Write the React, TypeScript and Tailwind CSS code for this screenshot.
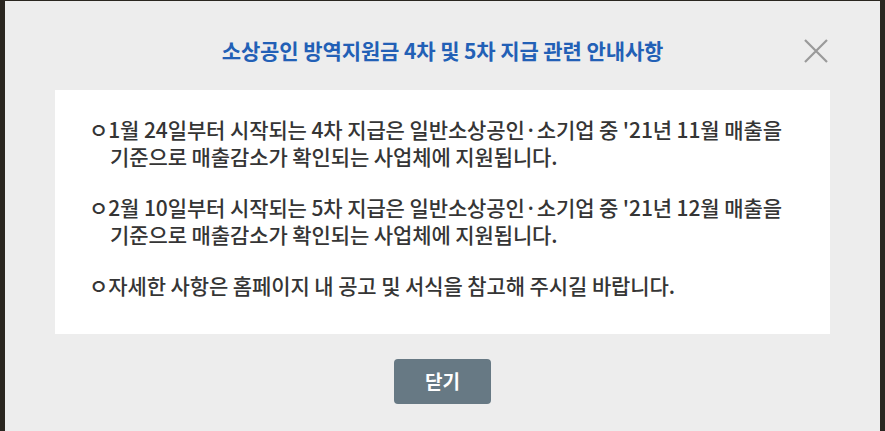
import React from "react";

const notices: string[][] = [
  [
    "1월 24일부터 시작되는 4차 지급은 일반소상공인·소기업 중 '21년 11월 매출을",
    "기준으로 매출감소가 확인되는 사업체에 지원됩니다.",
  ],
  [
    "2월 10일부터 시작되는 5차 지급은 일반소상공인·소기업 중 '21년 12월 매출을",
    "기준으로 매출감소가 확인되는 사업체에 지원됩니다.",
  ],
  ["자세한 사항은 홈페이지 내 공고 및 서식을 참고해 주시길 바랍니다."],
];

export default function App() {
  return (
    <div
      className="w-[885px] h-[431px] overflow-hidden bg-[#2a2620] flex pt-px px-[5px]"
      style={{ fontFamily: '"Noto Sans CJK KR", "Noto Sans", sans-serif' }}
    >
      <div className="relative flex-1 bg-[#ededed] flex flex-col">
        <h2 className="pt-[36px] h-[89px] text-center text-[21px] font-bold leading-[27px] tracking-[-0.1px] text-[#2260b6]">
          소상공인 방역지원금 4차 및 5차 지급 관련 안내사항
        </h2>
        <button className="absolute right-[50px] top-[36px] w-[28px] h-[28px] flex items-center justify-center">
          <svg width="26" height="26" viewBox="0 0 26 26">
            <path d="M2 2 L24 24 M24 2 L2 24" stroke="#9a9a9a" strokeWidth="2.2" />
          </svg>
        </button>
        <div className="mx-[50px] h-[244px] bg-white pt-[26px] pl-[34px]">
          {notices.map((lines, i) => (
            <p
              key={i}
              className="mb-[24px] pl-[21px] -indent-[21px] whitespace-nowrap text-[21px] font-medium leading-[27px] tracking-[-0.1px] text-[#353535]"
            >
              {"ㅇ" + lines[0]}
              {lines[1] && (
                <>
                  <br />
                  {lines[1]}
                </>
              )}
            </p>
          ))}
        </div>
        <div className="flex justify-center pt-[25px]">
          <button className="w-[97px] h-[45px] rounded-[4px] bg-[#677984] text-white text-[19px] font-bold">
            닫기
          </button>
        </div>
      </div>
    </div>
  );
}
